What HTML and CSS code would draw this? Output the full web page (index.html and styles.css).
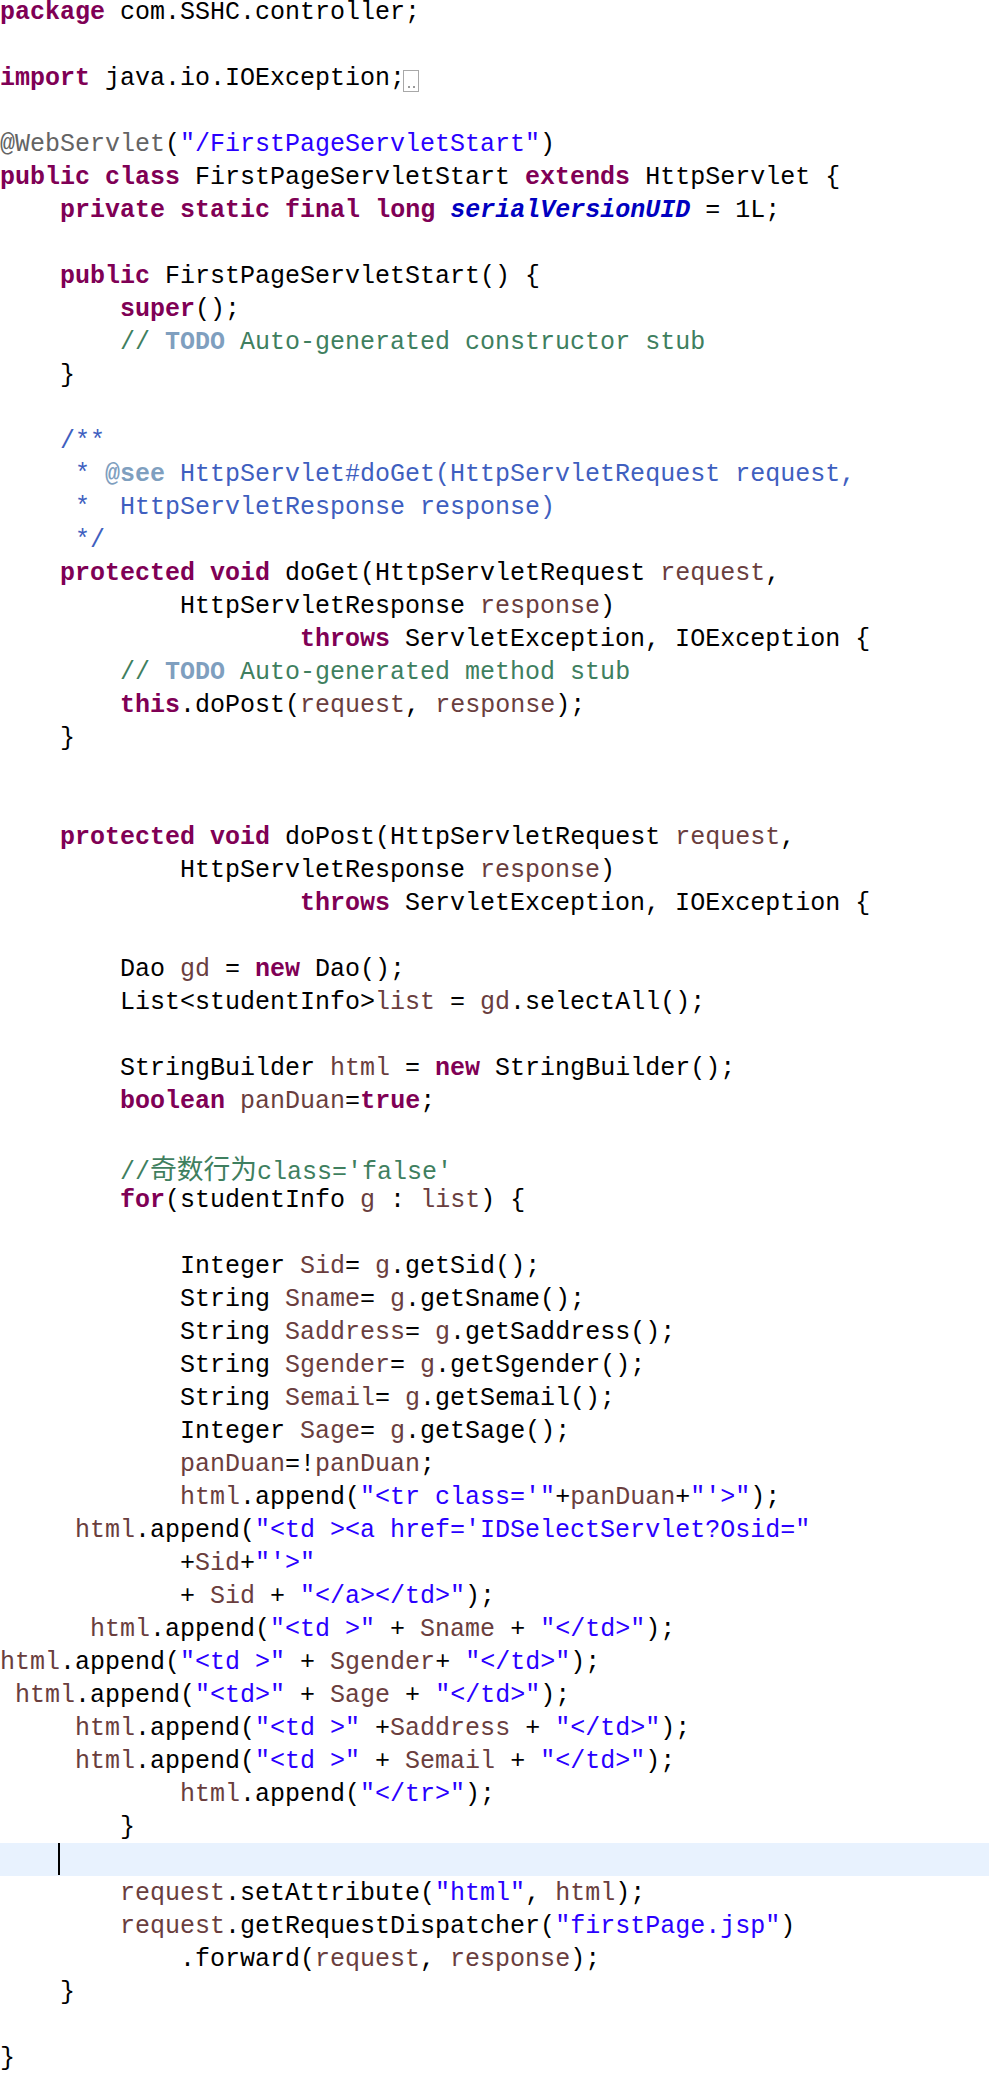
FILE: index.html
```html
<!DOCTYPE html>
<html>
<head>
<meta charset="utf-8">
<link rel="stylesheet" href="styles.css">
</head>
<body>
<div class="code">
<div class="ln"><span class="k">package</span> com.SSHC.controller;</div>
<div class="ln"></div>
<div class="ln"><span class="k">import</span> java.io.IOException;<span class="fold"><i></i><i></i></span></div>
<div class="ln"></div>
<div class="ln"><span class="a">@WebServlet</span>(<span class="s">"/FirstPageServletStart"</span>)</div>
<div class="ln"><span class="k">public</span> <span class="k">class</span> FirstPageServletStart <span class="k">extends</span> HttpServlet {</div>
<div class="ln">    <span class="k">private</span> <span class="k">static</span> <span class="k">final</span> <span class="k">long</span> <span class="f">serialVersionUID</span> = 1L;</div>
<div class="ln"></div>
<div class="ln">    <span class="k">public</span> FirstPageServletStart() {</div>
<div class="ln">        <span class="k">super</span>();</div>
<div class="ln">        <span class="c">// </span><span class="t">TODO</span><span class="c"> Auto-generated constructor stub</span></div>
<div class="ln">    }</div>
<div class="ln"></div>
<div class="ln">    <span class="jd">/**</span></div>
<div class="ln"><span class="jd">     * </span><span class="jt">@see</span><span class="jd"> HttpServlet#doGet(HttpServletRequest request,</span></div>
<div class="ln"><span class="jd">     *  HttpServletResponse response)</span></div>
<div class="ln"><span class="jd">     */</span></div>
<div class="ln">    <span class="k">protected</span> <span class="k">void</span> doGet(HttpServletRequest <span class="v">request</span>,</div>
<div class="ln">            HttpServletResponse <span class="v">response</span>)</div>
<div class="ln">                    <span class="k">throws</span> ServletException, IOException {</div>
<div class="ln">        <span class="c">// </span><span class="t">TODO</span><span class="c"> Auto-generated method stub</span></div>
<div class="ln">        <span class="k">this</span>.doPost(<span class="v">request</span>, <span class="v">response</span>);</div>
<div class="ln">    }</div>
<div class="ln"></div>
<div class="ln"></div>
<div class="ln">    <span class="k">protected</span> <span class="k">void</span> doPost(HttpServletRequest <span class="v">request</span>,</div>
<div class="ln">            HttpServletResponse <span class="v">response</span>)</div>
<div class="ln">                    <span class="k">throws</span> ServletException, IOException {</div>
<div class="ln"></div>
<div class="ln">        Dao <span class="v">gd</span> = <span class="k">new</span> Dao();</div>
<div class="ln">        List&lt;studentInfo&gt;<span class="v">list</span> = <span class="v">gd</span>.selectAll();</div>
<div class="ln"></div>
<div class="ln">        StringBuilder <span class="v">html</span> = <span class="k">new</span> StringBuilder();</div>
<div class="ln">        <span class="k">boolean</span> <span class="v">panDuan</span>=<span class="k">true</span>;</div>
<div class="ln"></div>
<div class="ln">        <span class="c">//<span class="cjk">奇数行为</span>class='false'</span></div>
<div class="ln">        <span class="k">for</span>(studentInfo <span class="v">g</span> : <span class="v">list</span>) {</div>
<div class="ln"></div>
<div class="ln">            Integer <span class="v">Sid</span>= <span class="v">g</span>.getSid();</div>
<div class="ln">            String <span class="v">Sname</span>= <span class="v">g</span>.getSname();</div>
<div class="ln">            String <span class="v">Saddress</span>= <span class="v">g</span>.getSaddress();</div>
<div class="ln">            String <span class="v">Sgender</span>= <span class="v">g</span>.getSgender();</div>
<div class="ln">            String <span class="v">Semail</span>= <span class="v">g</span>.getSemail();</div>
<div class="ln">            Integer <span class="v">Sage</span>= <span class="v">g</span>.getSage();</div>
<div class="ln">            <span class="v">panDuan</span>=!<span class="v">panDuan</span>;</div>
<div class="ln">            <span class="v">html</span>.append(<span class="s">"&lt;tr class='"</span>+<span class="v">panDuan</span>+<span class="s">"'&gt;"</span>);</div>
<div class="ln">     <span class="v">html</span>.append(<span class="s">"&lt;td &gt;&lt;a href='IDSelectServlet?Osid="</span></div>
<div class="ln">            +<span class="v">Sid</span>+<span class="s">"'&gt;"</span></div>
<div class="ln">            + <span class="v">Sid</span> + <span class="s">"&lt;/a&gt;&lt;/td&gt;"</span>);</div>
<div class="ln">      <span class="v">html</span>.append(<span class="s">"&lt;td &gt;"</span> + <span class="v">Sname</span> + <span class="s">"&lt;/td&gt;"</span>);</div>
<div class="ln"><span class="v">html</span>.append(<span class="s">"&lt;td &gt;"</span> + <span class="v">Sgender</span>+ <span class="s">"&lt;/td&gt;"</span>);</div>
<div class="ln"> <span class="v">html</span>.append(<span class="s">"&lt;td&gt;"</span> + <span class="v">Sage</span> + <span class="s">"&lt;/td&gt;"</span>);</div>
<div class="ln">     <span class="v">html</span>.append(<span class="s">"&lt;td &gt;"</span> +<span class="v">Saddress</span> + <span class="s">"&lt;/td&gt;"</span>);</div>
<div class="ln">     <span class="v">html</span>.append(<span class="s">"&lt;td &gt;"</span> + <span class="v">Semail</span> + <span class="s">"&lt;/td&gt;"</span>);</div>
<div class="ln">            <span class="v">html</span>.append(<span class="s">"&lt;/tr&gt;"</span>);</div>
<div class="ln">        }</div>
<div class="ln current"><span class="caret"></span></div>
<div class="ln">        <span class="v">request</span>.setAttribute(<span class="s">"html"</span>, <span class="v">html</span>);</div>
<div class="ln">        <span class="v">request</span>.getRequestDispatcher(<span class="s">"firstPage.jsp"</span>)</div>
<div class="ln">            .forward(<span class="v">request</span>, <span class="v">response</span>);</div>
<div class="ln">    }</div>
<div class="ln"></div>
<div class="ln">}</div>
</div>
</body>
</html>
```

FILE: styles.css
```css
html, body {
  margin: 0;
  padding: 0;
  background: #ffffff;
}

.code {
  margin-top: -5px;
  font-family: "Liberation Mono", "DejaVu Sans Mono", monospace;
  font-size: 25px;
  color: #000000;
}

.ln {
  box-sizing: border-box;
  height: 33px;
  padding-top: 3px;
  line-height: 30px;
  white-space: pre;
  position: relative;
}

.ln.current {
  background: #e8f2fe;
}

.caret {
  position: absolute;
  left: 58px;
  top: 0;
  width: 2px;
  height: 32px;
  background: #000000;
}

.k {
  color: #7f0055;
  font-weight: bold;
}

.s {
  color: #2a00ff;
}

.c {
  color: #3f7f5f;
}

.t {
  color: #7f9fbf;
  font-weight: bold;
}

.jd {
  color: #3f5fbf;
}

.jt {
  color: #7f9fbf;
  font-weight: bold;
}

.a {
  color: #646464;
}

.f {
  color: #0000c0;
  font-weight: bold;
  font-style: italic;
}

.v {
  color: #6a3e3e;
}

.cjk {
  font-family: "Noto Sans CJK SC", sans-serif;
  font-size: 26.75px;
  line-height: 30px;
}

.fold {
  display: inline-flex;
  box-sizing: border-box;
  width: 16px;
  height: 22px;
  margin-left: -2px;
  vertical-align: -3px;
  border: 1px solid #a8a8a8;
  align-items: flex-end;
  justify-content: center;
  gap: 3px;
  padding-bottom: 3px;
}

.fold i {
  display: block;
  width: 2px;
  height: 2px;
  background: #9a9a9a;
}
```
